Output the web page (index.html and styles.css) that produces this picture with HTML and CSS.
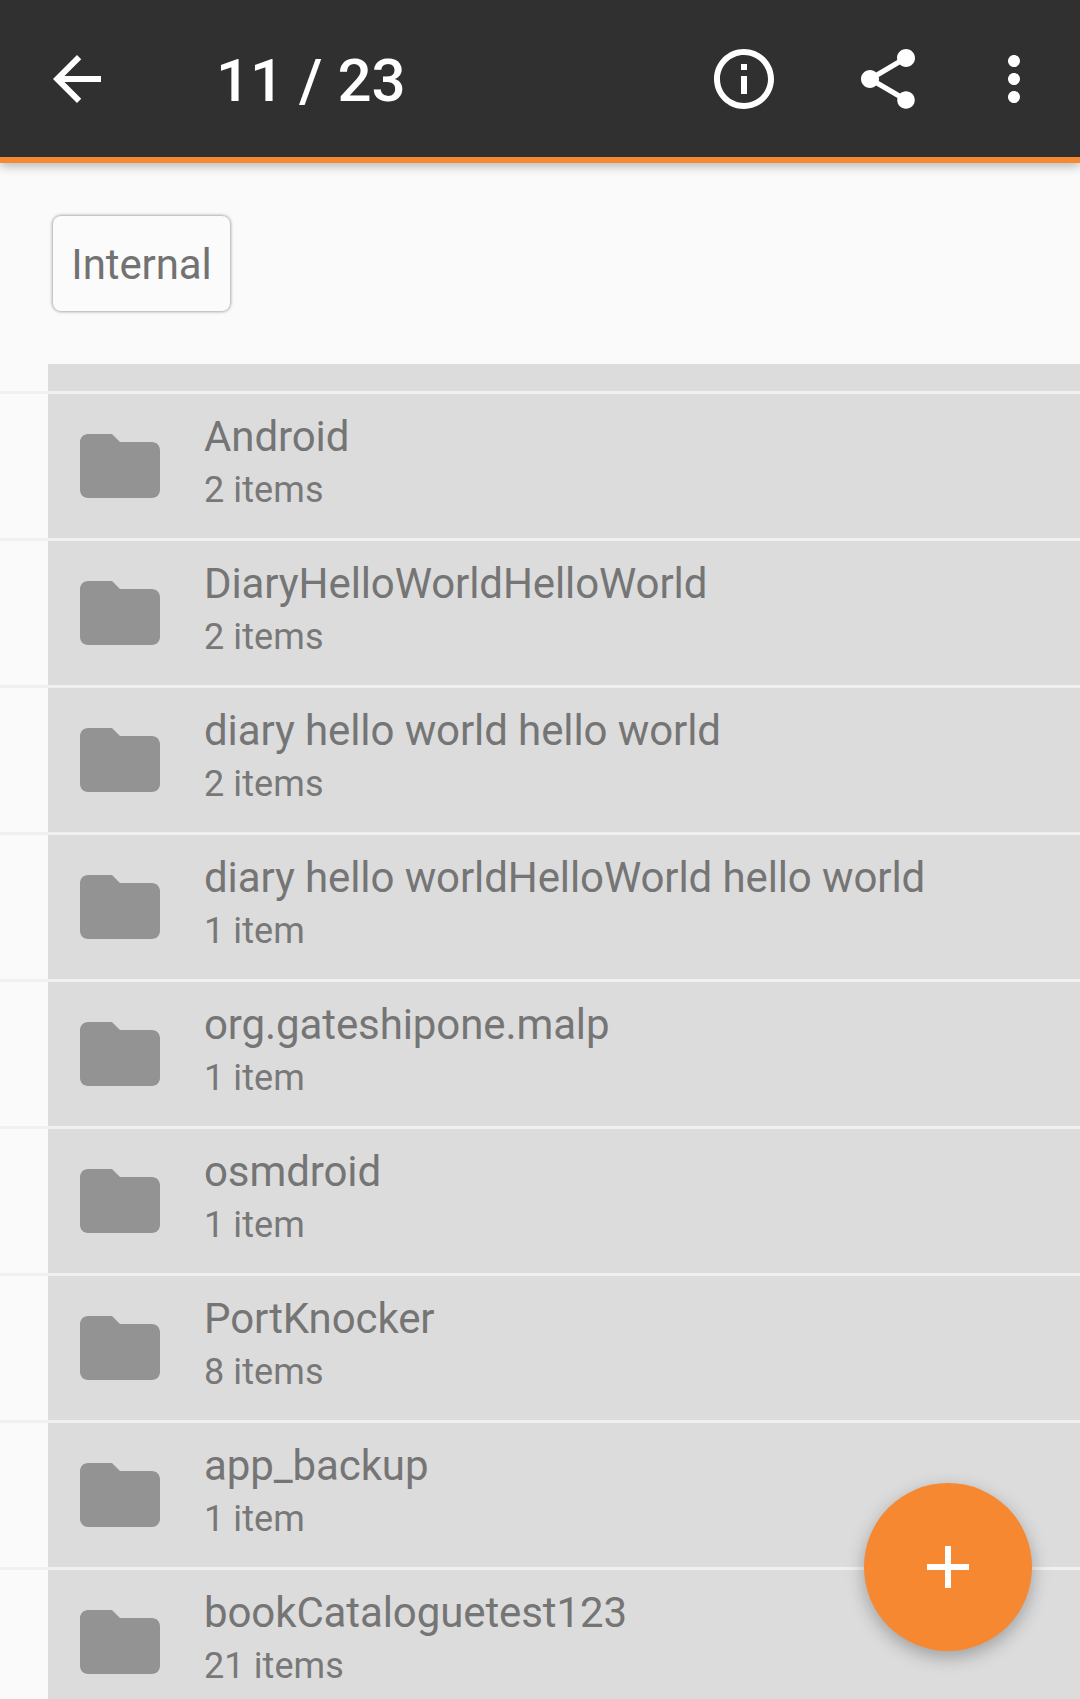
FILE: index.html
```html
<!DOCTYPE html>
<html lang="en">
<head>
<meta charset="utf-8">
<title>11 / 23</title>
<link rel="stylesheet" href="styles.css">
</head>
<body>
<div class="screen">
  <header class="toolbar">
    <svg class="icon back" viewBox="0 0 24 24"><path d="M20 11H7.83l5.59-5.59L12 4l-8 8 8 8 1.41-1.41L7.83 13H20v-2z"/></svg>
    <h1 class="title">11 / 23</h1>
    <svg class="icon info" viewBox="0 0 24 24"><path d="M11 7h2v2h-2zm0 4h2v6h-2zm1-9C6.48 2 2 6.48 2 12s4.48 10 10 10 10-4.48 10-10S17.52 2 12 2zm0 18c-4.41 0-8-3.59-8-8s3.59-8 8-8 8 3.59 8 8-3.59 8-8 8z"/></svg>
    <svg class="icon share" viewBox="0 0 24 24"><path d="M18 16.08c-.76 0-1.44.3-1.96.77L8.91 12.7c.05-.23.09-.46.09-.7s-.04-.47-.09-.7l7.05-4.11c.54.5 1.25.81 2.04.81 1.66 0 3-1.34 3-3s-1.34-3-3-3-3 1.34-3 3c0 .24.04.47.09.7L8.04 9.81C7.5 9.31 6.79 9 6 9c-1.66 0-3 1.34-3 3s1.34 3 3 3c.79 0 1.5-.31 2.04-.81l7.12 4.16c-.05.21-.08.43-.08.65 0 1.61 1.31 2.92 2.92 2.92 1.61 0 2.92-1.31 2.92-2.92s-1.31-2.92-2.92-2.92z"/></svg>
    <svg class="icon more" viewBox="0 0 24 24"><path d="M12 8c1.1 0 2-.9 2-2s-.9-2-2-2-2 .9-2 2 .9 2 2 2zm0 2c-1.1 0-2 .9-2 2s.9 2 2 2 2-.9 2-2-.9-2-2-2zm0 6c-1.1 0-2 .9-2 2s.9 2 2 2 2-.9 2-2-.9-2-2-2z"/></svg>
  </header>
  <div class="crumbs"><span class="chip">Internal</span></div>
  <main class="list">
    <div class="stub"></div>
    <div class="row"><div class="row-body"><svg class="folder" viewBox="0 0 24 24"><path d="M10 4H4c-1.1 0-2 .9-2 2v12c0 1.1.9 2 2 2h16c1.1 0 2-.9 2-2V8c0-1.1-.9-2-2-2h-8l-2-2z"/></svg><div class="text"><div class="name">Android</div><div class="count">2 items</div></div></div></div>
    <div class="row"><div class="row-body"><svg class="folder" viewBox="0 0 24 24"><path d="M10 4H4c-1.1 0-2 .9-2 2v12c0 1.1.9 2 2 2h16c1.1 0 2-.9 2-2V8c0-1.1-.9-2-2-2h-8l-2-2z"/></svg><div class="text"><div class="name">DiaryHelloWorldHelloWorld</div><div class="count">2 items</div></div></div></div>
    <div class="row"><div class="row-body"><svg class="folder" viewBox="0 0 24 24"><path d="M10 4H4c-1.1 0-2 .9-2 2v12c0 1.1.9 2 2 2h16c1.1 0 2-.9 2-2V8c0-1.1-.9-2-2-2h-8l-2-2z"/></svg><div class="text"><div class="name">diary hello world hello world</div><div class="count">2 items</div></div></div></div>
    <div class="row"><div class="row-body"><svg class="folder" viewBox="0 0 24 24"><path d="M10 4H4c-1.1 0-2 .9-2 2v12c0 1.1.9 2 2 2h16c1.1 0 2-.9 2-2V8c0-1.1-.9-2-2-2h-8l-2-2z"/></svg><div class="text"><div class="name">diary hello worldHelloWorld hello world</div><div class="count">1 item</div></div></div></div>
    <div class="row"><div class="row-body"><svg class="folder" viewBox="0 0 24 24"><path d="M10 4H4c-1.1 0-2 .9-2 2v12c0 1.1.9 2 2 2h16c1.1 0 2-.9 2-2V8c0-1.1-.9-2-2-2h-8l-2-2z"/></svg><div class="text"><div class="name">org.gateshipone.malp</div><div class="count">1 item</div></div></div></div>
    <div class="row"><div class="row-body"><svg class="folder" viewBox="0 0 24 24"><path d="M10 4H4c-1.1 0-2 .9-2 2v12c0 1.1.9 2 2 2h16c1.1 0 2-.9 2-2V8c0-1.1-.9-2-2-2h-8l-2-2z"/></svg><div class="text"><div class="name">osmdroid</div><div class="count">1 item</div></div></div></div>
    <div class="row"><div class="row-body"><svg class="folder" viewBox="0 0 24 24"><path d="M10 4H4c-1.1 0-2 .9-2 2v12c0 1.1.9 2 2 2h16c1.1 0 2-.9 2-2V8c0-1.1-.9-2-2-2h-8l-2-2z"/></svg><div class="text"><div class="name">PortKnocker</div><div class="count">8 items</div></div></div></div>
    <div class="row"><div class="row-body"><svg class="folder" viewBox="0 0 24 24"><path d="M10 4H4c-1.1 0-2 .9-2 2v12c0 1.1.9 2 2 2h16c1.1 0 2-.9 2-2V8c0-1.1-.9-2-2-2h-8l-2-2z"/></svg><div class="text"><div class="name">app_backup</div><div class="count">1 item</div></div></div></div>
    <div class="row"><div class="row-body"><svg class="folder" viewBox="0 0 24 24"><path d="M10 4H4c-1.1 0-2 .9-2 2v12c0 1.1.9 2 2 2h16c1.1 0 2-.9 2-2V8c0-1.1-.9-2-2-2h-8l-2-2z"/></svg><div class="text"><div class="name">bookCataloguetest123</div><div class="count">21 items</div></div></div></div>
  </main>
  <button class="fab" type="button" aria-label="Add"><svg class="plus" viewBox="0 0 42 42"><path d="M18 0h6v18h18v6H24v18h-6V24H0v-6h18z"/></svg></button>
</div>
</body>
</html>
```
FILE: styles.css
```css
* { box-sizing: border-box; }
html, body { margin: 0; padding: 0; }
body { font-family: Roboto, "Liberation Sans", sans-serif; background: #fafafa; }
.screen { position: relative; width: 1080px; height: 1699px; overflow: hidden; background: #fafafa; }

.toolbar {
  position: relative;
  z-index: 2;
  display: flex;
  align-items: center;
  height: 163px;
  padding: 0 30px 0 41px;
  background: #303030;
  border-bottom: 6px solid #f78832;
  box-shadow: 0 3px 10px rgba(0, 0, 0, 0.28);
}
.icon { flex: none; width: 72px; height: 72px; fill: #fff; }
.title { flex: 1; margin: 4px 0 0 103px; font-size: 60px; font-weight: 500; line-height: 72px; color: #fff; }
.info { margin-right: 72px; }
.share { margin-right: 54px; }

.crumbs { height: 201px; padding: 53px 0 0 53px; }
.chip {
  display: inline-flex;
  align-items: center;
  justify-content: center;
  width: 177px;
  height: 95px;
  padding-top: 2px;
  font-size: 42px;
  letter-spacing: -0.1px;
  color: #727272;
  background: #fbfbfb;
  border-radius: 8px;
  box-shadow: 0 0 3px 1px rgba(0, 0, 0, 0.32);
}

.stub { height: 27px; margin-left: 48px; background: #dcdcdc; }
.row { height: 147px; border-top: 3px solid #f0f0f0; }
.row-body { display: flex; align-items: center; height: 144px; margin-left: 48px; background: #dcdcdc; }
.folder { flex: none; width: 96px; height: 96px; margin-left: 24px; fill: #939393; }
.text { margin: 0 0 5px 36px; }
.name { margin-bottom: 1px; font-size: 42px; line-height: 53px; letter-spacing: -0.1px; color: #757575; white-space: nowrap; }
.count { font-size: 36px; line-height: 53px; letter-spacing: 0.1px; color: #787878; white-space: nowrap; }

.fab {
  position: absolute;
  left: 864px;
  top: 1483px;
  z-index: 3;
  display: flex;
  align-items: center;
  justify-content: center;
  width: 168px;
  height: 168px;
  padding: 0;
  border: 0;
  border-radius: 50%;
  background: #f78832;
  box-shadow: 0 6px 18px rgba(0, 0, 0, 0.28);
}
.plus { width: 42px; height: 42px; fill: #fff; }
```
